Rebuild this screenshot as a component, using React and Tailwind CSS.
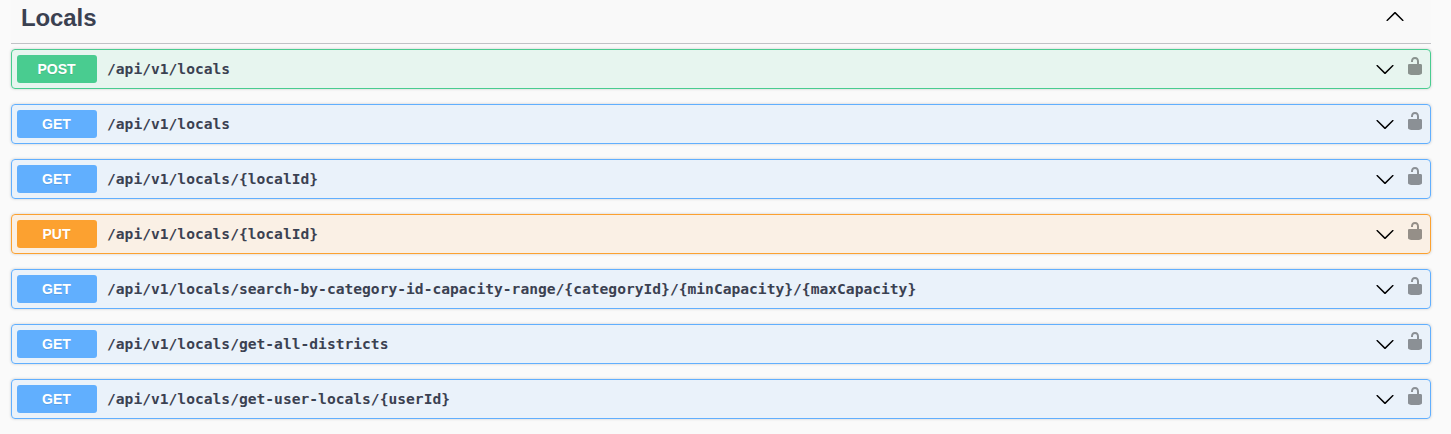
const METHODS = {
  POST: { row: 'border-[#49cc90] bg-[#49cc90]/10', badge: 'bg-[#49cc90]' },
  GET: { row: 'border-[#61affe] bg-[#61affe]/10', badge: 'bg-[#61affe]' },
  PUT: { row: 'border-[#fca130] bg-[#fca130]/10', badge: 'bg-[#fca130]' },
};

const OPERATIONS = [
  ['POST', '/api/v1/locals'],
  ['GET', '/api/v1/locals'],
  ['GET', '/api/v1/locals/{localId}'],
  ['PUT', '/api/v1/locals/{localId}'],
  ['GET', '/api/v1/locals/search-by-category-id-capacity-range/{categoryId}/{minCapacity}/{maxCapacity}'],
  ['GET', '/api/v1/locals/get-all-districts'],
  ['GET', '/api/v1/locals/get-user-locals/{userId}'],
];

function ArrowUp() {
  return (
    <svg width="20" height="20" viewBox="0 0 20 20" className="shrink-0">
      <path d="M17.418 14.908c.272.268.709.268.979 0s.271-.701 0-.969l-7.908-7.83c-.27-.268-.707-.268-.979 0l-7.908 7.83c-.27.268-.27.701 0 .969s.709.268.979 0L10 7.767z" />
    </svg>
  );
}

function ArrowDown() {
  return (
    <svg width="20" height="20" viewBox="0 0 20 20" className="shrink-0">
      <path d="M17.418 6.109c.272-.268.709-.268.979 0s.271.701 0 .969l-7.908 7.83c-.27.268-.707.268-.979 0l-7.908-7.83c-.27-.268-.27-.701 0-.969s.709-.268.979 0L10 13.25z" />
    </svg>
  );
}

function Unlocked() {
  return (
    <svg width="20" height="20" viewBox="0 0 20 20" className="mb-[6px] ml-[10px] shrink-0 opacity-40">
      <path d="M15.8 8H14V5.6C14 2.703 12.665 1 10 1 7.334 1 6 2.703 6 5.6V6h2v-.801C8 3.754 8.797 3 10 3c1.203 0 2 .754 2 2.199V8H4c-.553 0-1 .646-1 1.199V17c0 .549.428 1.139.951 1.307l1.197.387C5.672 18.861 6.55 19 7.1 19h5.8c.549 0 1.428-.139 1.951-.307l1.196-.387c.524-.167.953-.757.953-1.306V9.199C17 8.646 16.352 8 15.8 8z" />
    </svg>
  );
}

function Operation({ method, path }) {
  const style = METHODS[method];
  return (
    <div className={`flex h-10 items-center rounded-[4px] border pl-[5px] pr-[5px] shadow-[0_0_3px_rgba(0,0,0,0.19)] ${style.row}`}>
      <span
        className={`h-7 w-20 shrink-0 rounded-[3px] pr-px text-center text-[14px] font-bold leading-7 text-white [text-shadow:0_1px_0_rgba(0,0,0,0.1)] ${style.badge}`}
      >
        {method}
      </span>
      <span className="grow whitespace-nowrap pl-[10px] font-['DejaVu_Sans_Mono',monospace] text-[14.61px] font-bold leading-5">
        {path}
      </span>
      <ArrowDown />
      <Unlocked />
    </div>
  );
}

export default function App() {
  return (
    <div className="h-[434px] overflow-hidden bg-[#fafafa] pl-[11px] pr-5 font-['Liberation_Sans',Arial,sans-serif] text-[#3b4151]">
      <header className="mb-[5px] flex h-11 items-start justify-between border-b border-[#3b4151]/30 bg-black/[0.004] pl-[10px] pr-[26px]">
        <h2 className="pt-[2px] text-[24px] font-bold leading-8 tracking-[-0.1px]">Locals</h2>
        <span className="pt-[6px] text-black">
          <ArrowUp />
        </span>
      </header>
      <main className="flex flex-col gap-[15px]">
        {OPERATIONS.map(([method, path]) => (
          <Operation key={method + path} method={method} path={path} />
        ))}
      </main>
    </div>
  );
}
